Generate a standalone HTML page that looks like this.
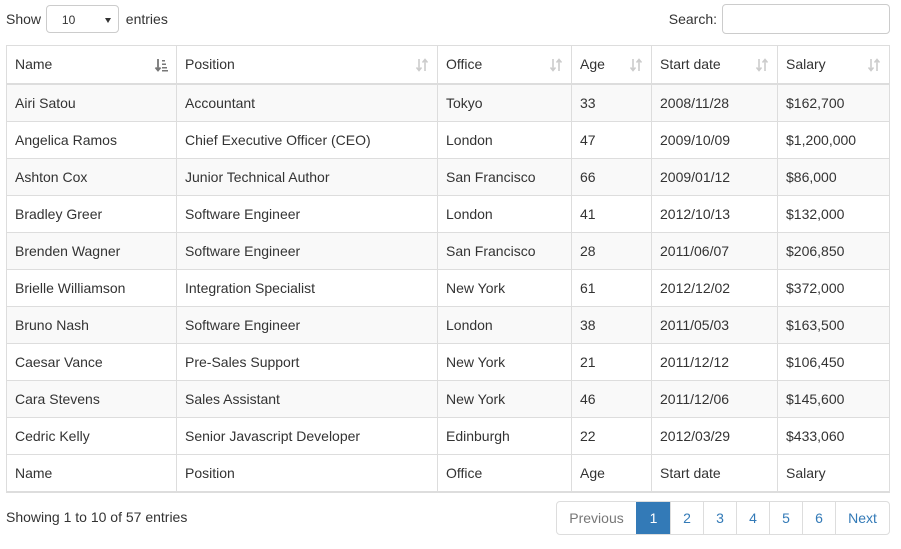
<!DOCTYPE html>
<html><head><style>
body{margin:0;font-family:"Liberation Sans",sans-serif;font-size:14px;color:#333;background:#fff;}
.top{position:absolute;top:4px;left:6px;right:11px;height:30px;}
.len{position:absolute;left:0;top:0;line-height:30px;}
.sel{display:inline-block;vertical-align:middle;width:73px;height:28px;border:1px solid #ccc;border-radius:4px;margin:0 3px 0 1px;position:relative;font-size:12px;line-height:28px;box-sizing:border-box;padding-left:15px;top:-1px}
.sel:after{content:"";position:absolute;right:7px;top:12px;border-left:3px solid transparent;border-right:3px solid transparent;border-top:5px solid #333;}
.srch{position:absolute;right:0;top:0;line-height:30px;}
.srch span{display:inline-block;vertical-align:middle;width:168px;height:30px;border:1px solid #ccc;border-radius:4px;margin-left:5px;box-sizing:border-box;position:relative;top:-1px}
table{position:absolute;left:6px;top:45px;border-collapse:collapse;table-layout:fixed;width:883px;}
td,th{border:1px solid #ddd;padding:0 8px;height:36px;text-align:left;font-weight:normal;white-space:nowrap;position:relative}
thead th{height:36px;border-bottom:2px solid #ddd;padding-bottom:1px}
tfoot th{border-bottom:2px solid #ddd;border-top:1px solid #ddd}
tbody tr:nth-child(odd) td{background:#f9f9f9}
.ic{position:absolute;right:8px;top:12px;width:14px;height:14px}
.info{position:absolute;left:6px;top:509px;}
.pg{position:absolute;left:556px;top:501px;display:flex;border:1px solid #ddd;border-radius:4px;height:34px;box-sizing:border-box;}
.pg div{height:32px;line-height:32px;width:32px;text-align:center;color:#337ab7;border-left:1px solid #ddd;}
.pg div:first-child{border-left:0;width:79px;color:#777}
.pg div.a{background:#337ab7;color:#fff;border-color:#337ab7;width:33px}
.pg div.n{width:53px}
</style></head><body>
<div class="top"><div class="len">Show <span class="sel">10</span> entries</div><div class="srch">Search:<span></span></div></div>
<svg width="0" height="0" style="position:absolute"><defs>
<g id="ud"><path d="M4 1v11M1.5 9.5L4 12.5 6.5 9.5" stroke="currentColor" stroke-width="1.6" fill="none"/><path d="M10 13V2M7.5 4.5L10 1.5 12.5 4.5" stroke="currentColor" stroke-width="1.6" fill="none"/></g>
<g id="as"><path d="M4 1v11M1.5 9.5L4 12.5 6.5 9.5" stroke="currentColor" stroke-width="1.8" fill="none"/><rect x="8" y="2" width="3" height="1.5" fill="currentColor"/><rect x="8" y="5.5" width="4" height="1.5" fill="currentColor"/><rect x="8" y="9" width="5" height="1.5" fill="currentColor"/><rect x="8" y="12" width="6" height="1.5" fill="currentColor"/></g>
</defs></svg>
<table>
<colgroup><col style="width:170px"><col style="width:261px"><col style="width:134px"><col style="width:80px"><col style="width:126px"><col style="width:112px"></colgroup>
<thead><tr><th>Name<svg class="ic" style="color:#777"><use href="#as"/></svg></th><th>Position<svg class="ic" style="color:#ccc"><use href="#ud"/></svg></th><th>Office<svg class="ic" style="color:#ccc"><use href="#ud"/></svg></th><th>Age<svg class="ic" style="color:#ccc"><use href="#ud"/></svg></th><th>Start date<svg class="ic" style="color:#ccc"><use href="#ud"/></svg></th><th>Salary<svg class="ic" style="color:#ccc"><use href="#ud"/></svg></th></tr></thead>
<tbody>
<tr><td>Airi Satou</td><td>Accountant</td><td>Tokyo</td><td>33</td><td>2008/11/28</td><td>$162,700</td></tr>
<tr><td>Angelica Ramos</td><td>Chief Executive Officer (CEO)</td><td>London</td><td>47</td><td>2009/10/09</td><td>$1,200,000</td></tr>
<tr><td>Ashton Cox</td><td>Junior Technical Author</td><td>San Francisco</td><td>66</td><td>2009/01/12</td><td>$86,000</td></tr>
<tr><td>Bradley Greer</td><td>Software Engineer</td><td>London</td><td>41</td><td>2012/10/13</td><td>$132,000</td></tr>
<tr><td>Brenden Wagner</td><td>Software Engineer</td><td>San Francisco</td><td>28</td><td>2011/06/07</td><td>$206,850</td></tr>
<tr><td>Brielle Williamson</td><td>Integration Specialist</td><td>New York</td><td>61</td><td>2012/12/02</td><td>$372,000</td></tr>
<tr><td>Bruno Nash</td><td>Software Engineer</td><td>London</td><td>38</td><td>2011/05/03</td><td>$163,500</td></tr>
<tr><td>Caesar Vance</td><td>Pre-Sales Support</td><td>New York</td><td>21</td><td>2011/12/12</td><td>$106,450</td></tr>
<tr><td>Cara Stevens</td><td>Sales Assistant</td><td>New York</td><td>46</td><td>2011/12/06</td><td>$145,600</td></tr>
<tr><td>Cedric Kelly</td><td>Senior Javascript Developer</td><td>Edinburgh</td><td>22</td><td>2012/03/29</td><td>$433,060</td></tr>
</tbody>
<tfoot><tr><th>Name</th><th>Position</th><th>Office</th><th>Age</th><th>Start date</th><th>Salary</th></tr></tfoot>
</table>
<div class="info">Showing 1 to 10 of 57 entries</div>
<div class="pg"><div>Previous</div><div class="a">1</div><div>2</div><div>3</div><div>4</div><div>5</div><div>6</div><div class="n">Next</div></div>
</body></html>
